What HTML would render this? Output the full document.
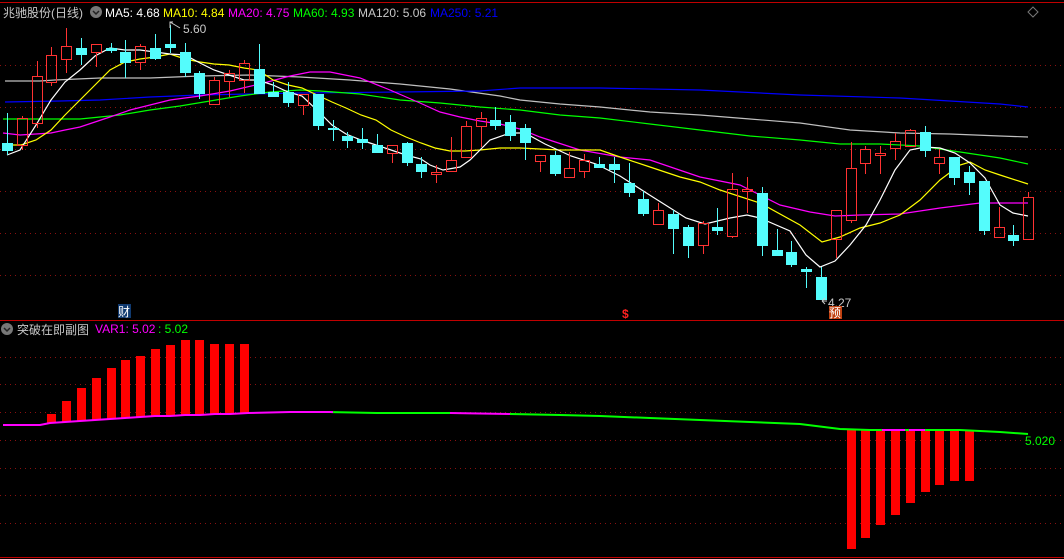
<!DOCTYPE html>
<html><head><meta charset="utf-8">
<style>
html,body{margin:0;padding:0;background:#000;width:1064px;height:559px;overflow:hidden}
svg{display:block}
text{font-family:"Liberation Sans","Noto Sans CJK SC",sans-serif}
</style></head><body>
<svg id="s" width="1064" height="559" viewBox="0 0 1064 559" xmlns="http://www.w3.org/2000/svg">
<rect width="1064" height="559" fill="#000"/>
<g stroke="#8a1010" stroke-width="1" stroke-dasharray="1,4">
<line x1="0" y1="65.5" x2="1064" y2="65.5"/><line x1="0" y1="107.5" x2="1064" y2="107.5"/>
<line x1="0" y1="149.5" x2="1064" y2="149.5"/><line x1="0" y1="191.5" x2="1064" y2="191.5"/>
<line x1="0" y1="233.5" x2="1064" y2="233.5"/><line x1="0" y1="275.5" x2="1064" y2="275.5"/>
<line x1="0" y1="357.5" x2="1064" y2="357.5"/><line x1="0" y1="384.5" x2="1064" y2="384.5"/>
<line x1="0" y1="412.5" x2="1064" y2="412.5"/><line x1="0" y1="440.5" x2="1064" y2="440.5"/>
<line x1="0" y1="468.5" x2="1064" y2="468.5"/><line x1="0" y1="495.5" x2="1064" y2="495.5"/>
<line x1="0" y1="523.5" x2="1064" y2="523.5"/>
</g>
<line x1="0" y1="2.5" x2="1064" y2="2.5" stroke="#c00000"/>
<line x1="0" y1="320.5" x2="1064" y2="320.5" stroke="#c00000"/>
<line x1="0" y1="557.5" x2="1064" y2="557.5" stroke="#c00000"/>
<path d="M1033 7 L1038 12 L1033 17 L1028 12 Z" fill="none" stroke="#777"/>
<g id="ma"></g>
<g id="cd"></g>
<g id="sub"></g>
<text x="3" y="17" font-size="12" fill="#c8c8c8">兆驰股份(日线)</text>
<circle cx="96" cy="12" r="6" fill="#777"/><path d="M93 11 L96 14 L99 11" stroke="#222" stroke-width="1.5" fill="none"/>
<text x="105" y="17" font-size="12" fill="#fff">MA5: 4.68</text>
<text x="163" y="17" font-size="12" fill="#ffff00">MA10: 4.84</text>
<text x="228" y="17" font-size="12" fill="#ff00ff">MA20: 4.75</text>
<text x="293" y="17" font-size="12" fill="#00ff00">MA60: 4.93</text>
<text x="358" y="17" font-size="12" fill="#c8c8c8">MA120: 5.06</text>
<text x="430" y="17" font-size="12" fill="#0000ff">MA250: 5.21</text>
<path d="M170 28 L170 22 L173 22 M170 22 L180 28" stroke="#c8c8c8" fill="none"/>
<text x="183" y="33" font-size="12" fill="#c8c8c8">5.60</text>
<path d="M822 301 L827 301 M822 301 L825 298 M822 301 L825 304" stroke="#c8c8c8" fill="none"/>
<text x="828" y="307" font-size="12" fill="#c8c8c8">4.27</text>
<rect x="118" y="304" width="13" height="14" fill="#103a70"/>
<text x="118" y="316" font-size="12" fill="#fff">财</text>
<text x="622" y="318" font-size="12" fill="#ff2020" font-weight="bold">$</text>
<rect x="829" y="306" width="13" height="13" fill="#c04010"/>
<text x="829" y="317" font-size="12" fill="#fff">预</text>
<circle cx="7" cy="329" r="6" fill="#777"/><path d="M4 328 L7 331 L10 328" stroke="#222" stroke-width="1.5" fill="none"/>
<text x="17" y="334" font-size="12" fill="#c8c8c8">突破在即副图</text>
<text x="95" y="333" font-size="12" fill="#ff00ff">VAR1: 5.02</text>
<text x="158" y="333" font-size="12" fill="#00ff00">: 5.02</text>
<text x="1025" y="445" font-size="12" fill="#00ff00">5.020</text>
</svg>
<script>
var NS="http://www.w3.org/2000/svg";
function el(p,t,a){var e=document.createElementNS(NS,t);for(var k in a)e.setAttribute(k,a[k]);p.appendChild(e);return e;}
var ma=document.getElementById('ma'),cd=document.getElementById('cd'),sub=document.getElementById('sub');
function pl(pts,c){el(ma,'polyline',{points:pts.map(function(p){return p.join(',')}).join(' '),fill:'none',stroke:c,'stroke-width':1.2});}
pl([[5,81],[40,81],[55,80],[100,78],[150,78],[200,76],[250,75],[300,77],[350,80],[400,84],[450,89],[500,96],[520,100],[560,104],[600,107],[650,112],[700,115],[750,119],[800,123],[850,130],[900,133],[950,134],[1000,136],[1028,137]],'#c0c0c0');
pl([[5,102],[60,101],[100,100],[150,97],[200,95],[250,94],[300,93],[400,92],[480,91],[520,88],[600,88],[700,90],[800,95],[900,98],[1000,104],[1028,107]],'#0000ff');
pl([[3,119],[40,119],[80,119],[120,115],[150,110],[180,106],[210,101],[240,96],[270,92],[300,90],[320,91],[360,94],[400,100],[440,103],[480,107],[520,110],[560,115],[600,118],[650,124],[700,130],[750,136],[800,140],[840,144],[880,144],[920,146],[960,152],[1000,158],[1028,164]],'#00ff00');
pl([[3,133],[20,135],[36,134],[51,133],[65,130],[80,127],[95,122],[110,117],[130,110],[150,105],[170,100],[200,96],[230,91],[260,84],[290,76],[310,72],[330,72],[360,78],[390,90],[420,103],[440,112],[460,117],[480,121],[500,124],[520,129],[540,137],[580,150],[620,157],[650,160],[700,177],[740,185],[780,205],[810,212],[835,216],[860,215],[900,214],[940,208],[980,203],[1028,203]],'#ff00ff');
pl([[7,145],[21,145],[36,140],[51,130],[65,115],[80,100],[95,85],[110,70],[125,62],[140,59],[155,57],[170,54],[185,59],[200,62],[214,64],[229,65],[244,68],[258,70],[273,80],[288,85],[302,88],[317,95],[332,102],[346,108],[361,115],[376,120],[391,130],[406,137],[421,143],[435,148],[450,151],[465,151],[480,150],[500,148],[520,148],[560,150],[600,150],[620,157],[650,167],[680,177],[700,182],[720,190],[760,203],[800,225],[822,242],[840,237],[860,228],[880,223],[900,215],[920,200],[940,180],[960,165],[970,162],[985,170],[1000,175],[1028,184]],'#ffff00');
pl([[7,155],[20,150],[36,125],[51,100],[65,82],[80,70],[95,56],[110,48],[125,50],[140,50],[155,52],[170,54],[185,55],[200,63],[214,70],[229,75],[244,80],[258,80],[273,85],[288,92],[302,96],[317,110],[332,125],[346,134],[361,140],[376,145],[391,150],[406,155],[421,159],[430,165],[443,170],[460,167],[470,160],[490,140],[510,133],[525,133],[545,144],[571,156],[596,164],[620,176],[648,194],[686,218],[705,224],[730,218],[747,215],[760,218],[790,231],[806,255],[820,267],[835,261],[850,245],[866,225],[880,200],[895,170],[910,150],[925,147],[940,148],[955,153],[970,163],[985,178],[1000,205],[1013,213],[1028,216]],'#ffffff');
var C=[
['c',143,151,113,155],['r',118,145,116,150],['r',76,123,61,128],['r',55,82,47,86],['r',46,59,28,73],['c',48,55,38,65],['r',44,52,44,67],['c',48,51,43,53],['c',52,63,40,78],['r',46,62,44,70],
['c',48,59,34,60],['c',44,48,25,53],['c',52,73,43,77],['c',73,94,71,99],['r',80,104,77,105],['r',73,81,70,97],['r',63,80,60,93],['c',69,94,44,94],['c',92,97,82,97],['c',92,103,82,107],
['r',94,105,94,115],['c',94,126,94,130],['c',128,130,120,141],['c',136,141,132,148],['c',139,143,128,149],['c',145,153,134,153],['r',145,153,145,163],['c',143,163,142,166],['c',164,172,157,178],['r',172,174,165,183],
['r',160,171,137,172],['r',126,157,121,157],['r',118,126,112,147],['c',120,126,107,130],['c',122,136,115,141],
['c',128,143,124,160],['r',155,161,155,172],['c',155,174,151,176],['r',168,177,152,177],['r',160,171,154,178],['c',164,168,157,168],['c',164,170,157,183],['c',183,193,163,197],['c',199,214,191,216],['r',210,224,203,225],
['c',214,229,210,254],['c',227,246,225,258],['r',223,245,221,254],['c',227,231,208,235],['r',189,236,173,238],['r',189,191,177,213],['c',193,246,187,256],['c',250,256,229,256],['c',252,265,241,267],['c',269,272,267,288],
['c',277,300,267,300],['r',210,239,210,258],['r',168,220,142,223],['r',149,163,146,174],['r',153,155,146,174],['r',141,148,133,160],['r',130,146,129,146],['c',132,151,126,157],['r',157,163,149,174],['c',157,178,157,185],
['c',172,183,166,195],['c',181,231,181,235],['r',227,237,207,238],['c',235,241,225,246],['r',197,239,192,239]];
C.forEach(function(d,i){
 var x=Math.round(7+i*14.8);
 var col=d[0]=='c'?'#54fcfc':'#ff3232';
 if(d[0]=='c'){
  el(cd,'line',{x1:x+.5,y1:d[3],x2:x+.5,y2:d[4],stroke:col});
  el(cd,'rect',{x:x-5,y:d[1],width:11,height:Math.max(1,d[2]-d[1]),fill:col});
 }else{
  if(d[3]<d[1])el(cd,'line',{x1:x+.5,y1:d[3],x2:x+.5,y2:d[1],stroke:col});
  if(d[4]>d[2])el(cd,'line',{x1:x+.5,y1:d[2],x2:x+.5,y2:d[4],stroke:col});
  el(cd,'rect',{x:x-4.5,y:d[1]+.5,width:10,height:Math.max(1,d[2]-d[1]),fill:'none',stroke:col});
 }
});
var L=[[3,425],[40,425],[50,423],[65,422],[80,421],[95,420],[110,419],[125,418],[140,417],[155,416],[170,416],[185,415],[200,415],[215,414],[230,414],[248,413],[290,412],[330,412],[377,413],[450,413],[510,414],[560,415],[600,416],[650,418],[700,420],[750,422],[800,424],[840,429],[870,430],[900,430],[960,430],[980,431],[1000,432],[1028,434]];
function ly(x){for(var i=1;i<L.length;i++){if(x<=L[i][0]){var a=L[i-1],b=L[i];return a[1]+(b[1]-a[1])*(x-a[0])/(b[0]-a[0]);}}return 434;}
var pos=[414,401,388,378,368,360,356,349,345,340,340,344,344,344];
pos.forEach(function(t,k){var x=Math.round(7+(3+k)*14.8);var b=ly(x);el(sub,'rect',{x:x-4,y:t,width:9,height:b-t,fill:'#ff0000'});});
var neg=[549,538,525,515,503,492,485,481,481];
neg.forEach(function(b,k){var x=Math.round(7+(57+k)*14.8);el(sub,'rect',{x:x-4,y:430,width:9,height:b-430,fill:'#ff0000'});});
var segs=[[3,333,'#ff00ff'],[333,450,'#00ff00'],[450,510,'#ff00ff'],[510,882,'#00ff00'],[882,905,'#ff00ff'],[905,909,'#00ff00'],[909,925,'#ff00ff'],[925,1028,'#00ff00']];
segs.forEach(function(s){var pts=[];pts.push([s[0],ly(s[0])]);L.forEach(function(p){if(p[0]>s[0]&&p[0]<s[1])pts.push(p);});pts.push([s[1],ly(s[1])]);
 el(sub,'polyline',{points:pts.map(function(p){return p.join(',')}).join(' '),fill:'none',stroke:s[2],'stroke-width':2});});
</script>
</body></html>
